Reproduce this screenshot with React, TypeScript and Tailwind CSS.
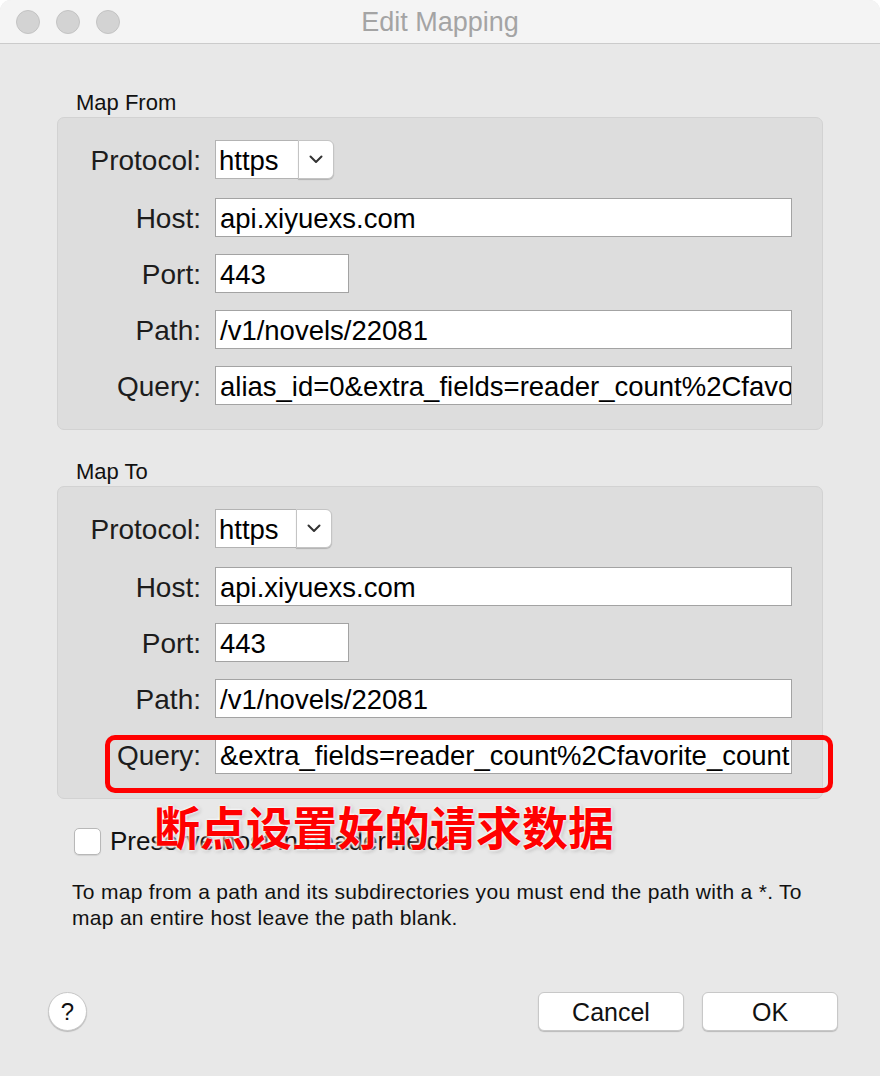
import React from "react";

const font = "font-['Liberation_Sans','Helvetica_Neue',Arial,sans-serif]";

function Label({ children }: { children: React.ReactNode }) {
  return (
    <div className="w-[143px] h-[39px] shrink-0 text-right text-[28px] leading-[36px] pt-[3px] text-[#1c1c1c]">
      {children}
    </div>
  );
}

function Field({ value, width }: { value: string; width: string }) {
  return (
    <div
      className={`${width} h-[39px] bg-white border border-[#a3a3a3] pl-[4px] pt-[2px] text-[27.5px] leading-[35px] text-black whitespace-nowrap overflow-hidden`}
    >
      {value}
    </div>
  );
}

function Popup({ width }: { width: string }) {
  return (
    <div className={`${width} h-[39px] flex`}>
      <div className="flex-1 bg-white border border-r-0 border-[#b3b3b3] pl-[3px] pt-[2px] text-[27.5px] leading-[35px] text-black">
        https
      </div>
      <div className="w-[36px] bg-white border border-[#c4c4c4] rounded-r-[6px] shadow-[0_1px_1px_rgba(0,0,0,0.2)] flex items-center justify-center">
        <svg width="14" height="9" viewBox="0 0 14 9" fill="none">
          <path d="M1.5 1.5 L7 7 L12.5 1.5" stroke="#333" strokeWidth="2" strokeLinecap="round" strokeLinejoin="round" />
        </svg>
      </div>
    </div>
  );
}

function Row({ label, children, extra }: { label: string; children: React.ReactNode; extra?: string }) {
  return (
    <div className={`flex items-center gap-[14px] ${extra ?? ""}`}>
      <Label>{label}</Label>
      {children}
    </div>
  );
}

function Group({ query, popupW }: { query: string; popupW: string }) {
  return (
    <div className="w-[766px] bg-[#dddddd] border border-[#d2d2d2] rounded-[7px] pt-[22px] pb-[24px] flex flex-col gap-[17px]">
      <Row label="Protocol:" extra="mb-[2px]">
        <Popup width={popupW} />
      </Row>
      <Row label="Host:">
        <Field value="api.xiyuexs.com" width="w-[577px]" />
      </Row>
      <Row label="Port:">
        <Field value="443" width="w-[134px]" />
      </Row>
      <Row label="Path:">
        <Field value="/v1/novels/22081" width="w-[577px]" />
      </Row>
      <Row label="Query:">
        <Field value={query} width="w-[577px]" />
      </Row>
    </div>
  );
}

export default function App() {
  return (
    <div className={`w-[880px] h-[1076px] bg-white overflow-hidden ${font}`}>
      <div className="relative w-full h-full rounded-t-[11px] bg-[#e8e8e8] flex flex-col overflow-hidden">
        {/* Title bar */}
        <div className="relative h-[44px] shrink-0 bg-[#f4f4f4] border-b border-[#cbcbcb] flex items-center">
          <div className="flex gap-[16px] pl-[16px]">
            <div className="w-[24px] h-[24px] rounded-full bg-[#d3d3d3] border border-[#c3c3c3]" />
            <div className="w-[24px] h-[24px] rounded-full bg-[#d3d3d3] border border-[#c3c3c3]" />
            <div className="w-[24px] h-[24px] rounded-full bg-[#d3d3d3] border border-[#c3c3c3]" />
          </div>
          <div className="absolute inset-0 flex items-center justify-center pt-[2px] text-[27px] text-[#a4a4a4] pointer-events-none">
            Edit Mapping
          </div>
        </div>

        {/* Body */}
        <div className="flex-1 flex flex-col pl-[57px]">
          <div className="mt-[46px] pl-[19px] text-[22px] leading-[26px] text-[#111]">Map From</div>
          <div className="mt-[1px]">
            <Group query="alias_id=0&extra_fields=reader_count%2Cfavorite_count" popupW="w-[119px]" />
          </div>

          <div className="mt-[29px] pl-[19px] text-[22px] leading-[26px] text-[#111]">Map To</div>
          <div className="mt-[1px]">
            <Group query="&extra_fields=reader_count%2Cfavorite_count" popupW="w-[117px]" />
          </div>

          <div className="mt-[29px] ml-[17px] flex items-center gap-[9px]">
            <div className="w-[27px] h-[27px] rounded-[5px] bg-white border border-[#b8b8b8] shadow-[0_1px_1px_rgba(0,0,0,0.1)]" />
            <div className="text-[26px] leading-[27px] text-[#111]">Preserve host in header fields</div>
          </div>

          <div className="mt-[24px] ml-[15px] w-[752px] text-[21px] leading-[26px] tracking-[0.3px] text-[#111]">
            To map from a path and its subdirectories you must end the path with a *. To map an entire host leave the path blank.
          </div>

          <div className="mt-[61px] flex items-center pr-[42px]">
            <div className="-ml-[9px] w-[39px] h-[39px] rounded-full bg-white border border-[#c8c8c8] shadow-[0_1px_1px_rgba(0,0,0,0.2)] flex items-center justify-center text-[24px] text-[#111]">
              ?
            </div>
            <div className="flex-1" />
            <div className="w-[146px] h-[39px] rounded-[6px] bg-white border border-[#c8c8c8] shadow-[0_1px_1px_rgba(0,0,0,0.2)] flex items-center justify-center pt-[2px] text-[25px] text-[#111]">
              Cancel
            </div>
            <div className="ml-[18px] w-[136px] h-[39px] rounded-[6px] bg-white border border-[#c8c8c8] shadow-[0_1px_1px_rgba(0,0,0,0.2)] flex items-center justify-center pt-[2px] text-[25px] text-[#111]">
              OK
            </div>
          </div>
        </div>

        {/* Annotation overlay */}
        <div className="absolute left-[105px] top-[735px] w-[728px] h-[58px] rounded-[10px] border-[5px] border-[#ff0000]" />
        <div className="absolute left-[154px] top-[797px] text-[46px] leading-[56px] font-bold text-[#ff0000] font-['Noto_Sans_CJK_SC',sans-serif] [text-shadow:0_0_3px_#fff,0_0_3px_#fff,0_0_4px_#fff,1px_1px_4px_rgba(0,0,0,0.4)]">
          断点设置好的请求数据
        </div>
      </div>
    </div>
  );
}
